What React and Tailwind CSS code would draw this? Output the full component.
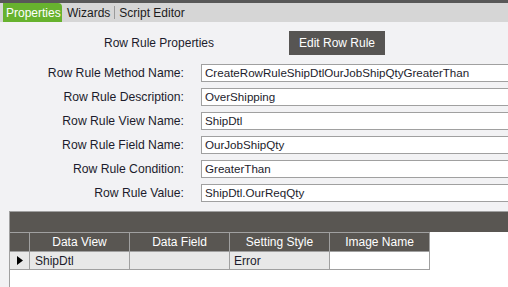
export default function App() {
  const rows = [
    ["Row Rule Method Name:", "CreateRowRuleShipDtlOurJobShipQtyGreaterThan"],
    ["Row Rule Description:", "OverShipping"],
    ["Row Rule View Name:", "ShipDtl"],
    ["Row Rule Field Name:", "OurJobShipQty"],
    ["Row Rule Condition:", "GreaterThan"],
    ["Row Rule Value:", "ShipDtl.OurReqQty"],
  ];
  const font = { fontFamily: '"Liberation Sans", Arial, sans-serif' };
  return (
    <div className="w-[508px] h-[287px] overflow-hidden flex flex-col bg-[#f2f2f4] text-[12px] text-[#1c1c2c]" style={font}>
      <div className="h-[3px] bg-[#585858] shrink-0" />
      <div className="h-[19px] bg-[#d6d6d6] flex items-stretch shrink-0 pl-[3px]">
        <div className="w-[59px] bg-[#67b22e] rounded-tr-[4px] text-white flex items-center pl-[3px] leading-none">Properties</div>
        <div className="flex items-center pl-[5px] pr-[4px] text-[#1c1c1c] leading-none">Wizards</div>
        <div className="w-px bg-[#9a9a9a] my-[3px]" />
        <div className="flex items-center pl-[4px] text-[#1c1c1c] leading-none">Script Editor</div>
      </div>
      <div className="flex items-center h-[24px] mt-[9px] shrink-0">
        <div className="pl-[104px] w-[289px] shrink-0 leading-none">Row Rule Properties</div>
        <div className="w-[96px] h-[24px] shrink-0 bg-[#575553] text-white flex items-center justify-center leading-none">Edit Row Rule</div>
      </div>
      <div className="flex flex-col gap-[6px] mt-[9px] shrink-0 overflow-hidden">
        {rows.map(([l, v]) => (
          <div key={l} className="flex items-center h-[18px]">
            <div className="w-[184px] shrink-0 text-right leading-none text-[12.2px]">{l}</div>
            <div className="ml-[17px] w-[320px] shrink-0 h-[18px] bg-white border border-[#a0a0a0] flex items-center pl-[3px] leading-none text-[11.6px]">{v}</div>
          </div>
        ))}
      </div>
      <div className="ml-[9px] mt-[9px] flex-1 bg-white border-l border-t border-[#a0a0a0] flex flex-col">
        <div className="h-[20px] bg-[#595652] shrink-0" />
        <div className="flex h-[19px] shrink-0 bg-white">
          <div className="w-[20px] bg-[#595652] border-r border-t border-[#a0a0a0]" />
          {["Data View", "Data Field", "Setting Style", "Image Name"].map((h) => (
            <div key={h} className="w-[100px] bg-[#595652] text-white border-r border-t border-[#a0a0a0] flex items-center justify-center leading-none">{h}</div>
          ))}
        </div>
        <div className="flex h-[19px] shrink-0">
          <div className="w-[20px] bg-[#e8e8e8] border-r border-y border-[#a0a0a0] flex items-center justify-center">
            <svg width="6" height="9" viewBox="0 0 6 9"><path d="M0 0 L6 4.5 L0 9 Z" fill="#000" /></svg>
          </div>
          <div className="w-[100px] bg-[#e8e8e8] border-r border-y border-[#a0a0a0] flex items-center pl-[5px] leading-none">ShipDtl</div>
          <div className="w-[100px] bg-[#e8e8e8] border-r border-y border-[#a0a0a0]" />
          <div className="w-[100px] bg-[#e8e8e8] border-r border-y border-[#a0a0a0] flex items-center pl-[4px] leading-none">Error</div>
          <div className="w-[100px] bg-white border-r border-y border-[#a0a0a0]" />
        </div>
      </div>
    </div>
  );
}
